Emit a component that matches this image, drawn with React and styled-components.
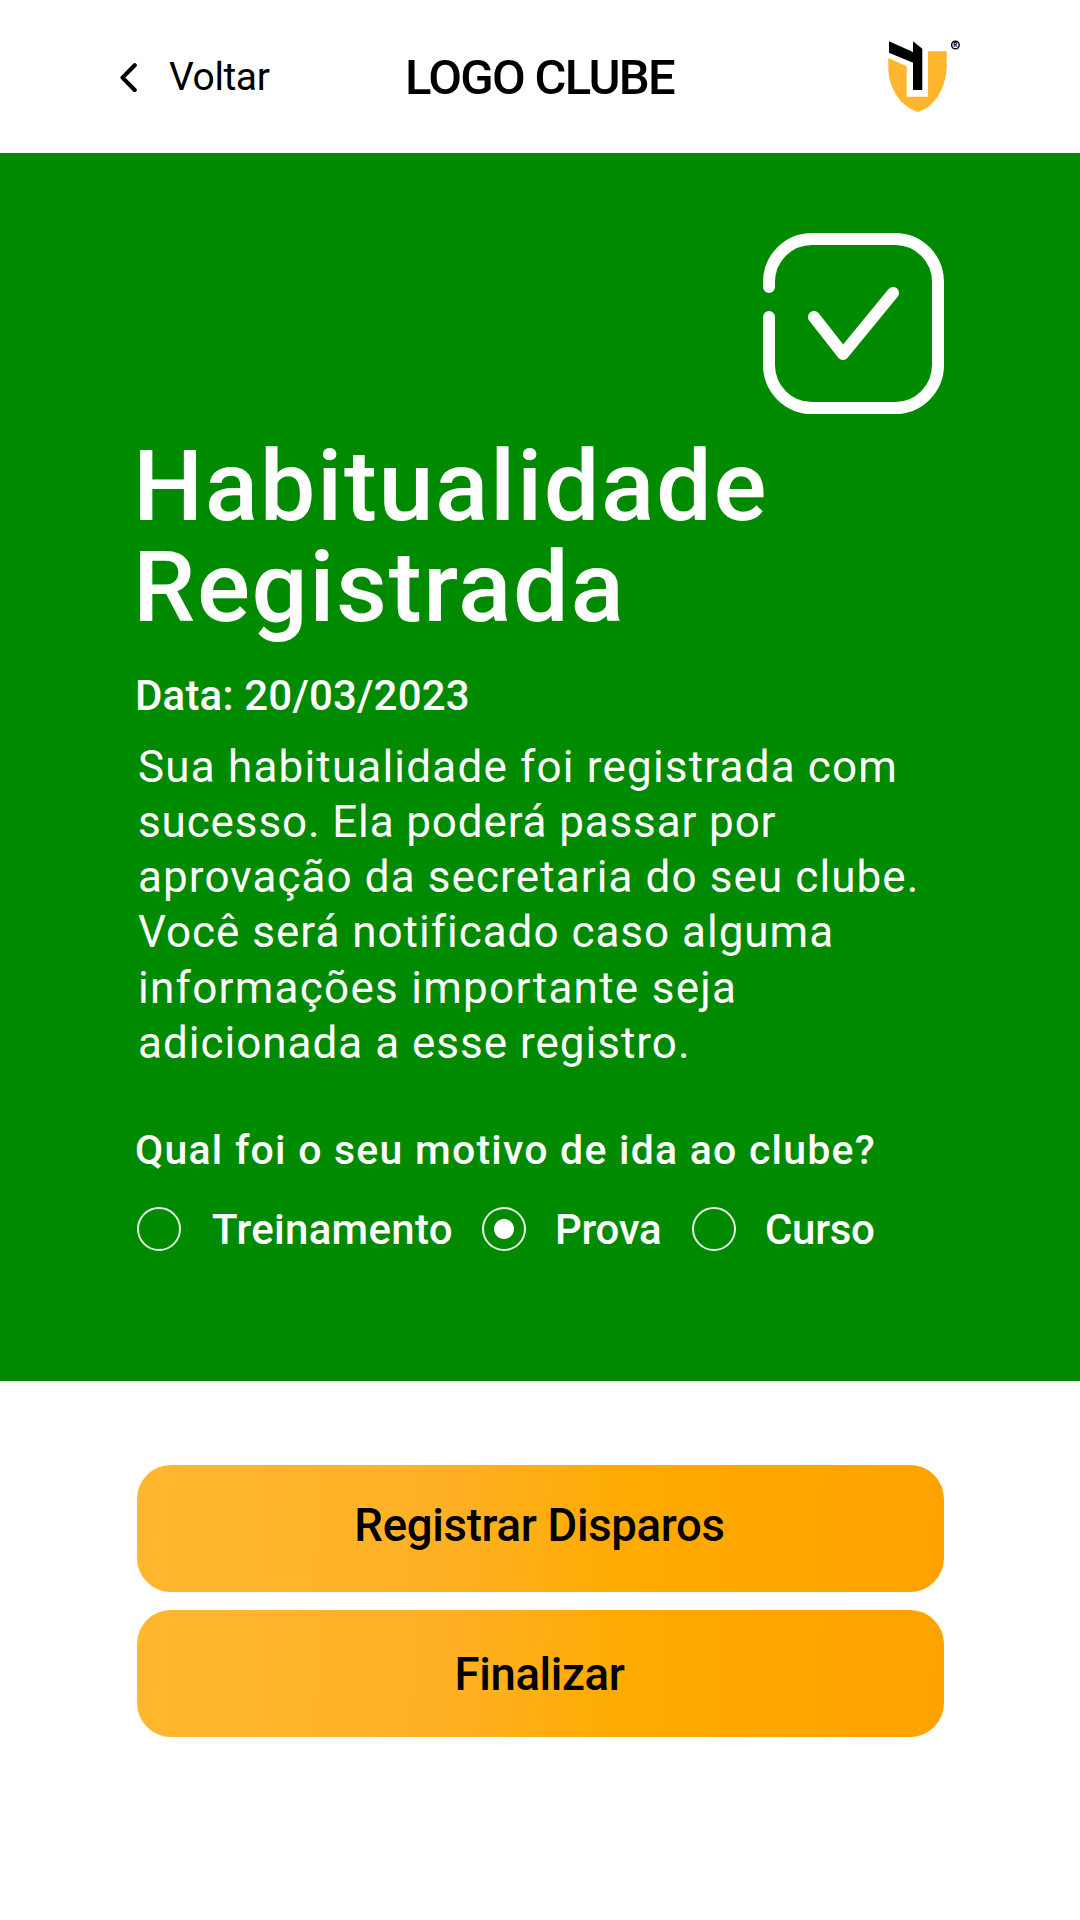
import React, { useState } from "react";
import styled, { createGlobalStyle } from "styled-components";

const GlobalStyle = createGlobalStyle`
  * {
    box-sizing: border-box;
  }

  body {
    margin: 0;
    background: #fff;
    font-family: Roboto, "Liberation Sans", sans-serif;
  }
`;

const Page = styled.div`
  display: flex;
  flex-direction: column;
  width: 1080px;
  height: 1920px;
  overflow: hidden;
`;

const Header = styled.header`
  display: grid;
  grid-template-columns: 285px 270px 285px;
  align-items: center;
  height: 153px;
  padding: 0 120px;
`;

const BackButton = styled.button`
  display: flex;
  align-items: center;
  gap: 32px;
  padding: 0;
  border: 0;
  background: none;
  color: #000;
  font: 400 39px/46px Roboto, sans-serif;
  cursor: pointer;
`;

const ClubName = styled.div`
  padding-top: 2px;
  color: #000;
  font-size: 49px;
  font-weight: 500;
  line-height: 58px;
`;

const Brand = styled.div`
  display: flex;
  justify-content: flex-end;
`;

const Panel = styled.main`
  display: flex;
  flex-direction: column;
  height: 1228px;
  padding: 80px 136px 0 137px;
  background: #008a00;
  color: #fff;
`;

const CheckIcon = styled.svg`
  align-self: flex-end;
  flex: none;
  width: 181px;
  height: 181px;
`;

const Title = styled.h1`
  margin: 22px 0 0 -4px;
  font-size: 99px;
  font-weight: 500;
  line-height: 101px;
  letter-spacing: 1.6px;
`;

const Line = styled.span`
  display: block;
  white-space: nowrap;
  letter-spacing: ${({ $spacing = 0 }) => $spacing}px;
`;

const DateText = styled.div`
  margin: 33px 0 0 -2px;
  font-size: 42px;
  font-weight: 500;
  line-height: 50px;
`;

const Message = styled.p`
  margin: 19px 0 0 1px;
  font-size: 44px;
  line-height: 55.15px;
`;

const Question = styled.div`
  margin: 54px 0 0 -2px;
  font-size: 41px;
  font-weight: 500;
  line-height: 50px;
`;

const Options = styled.div`
  display: flex;
  margin-top: 32px;
`;

const Option = styled.label`
  display: flex;
  align-items: center;
  width: ${({ $width }) => $width}px;
  height: 44px;
  font-size: 42px;
  font-weight: 500;
  line-height: 46px;
  cursor: pointer;

  > span {
    padding-top: 2px;
  }
`;

const Radio = styled.input`
  flex: none;
  appearance: none;
  width: 44px;
  height: 44px;
  margin: 0 ${({ $gap }) => $gap}px 0 0;
  border: 2px solid rgba(255, 255, 255, 0.9);
  border-radius: 50%;

  &:checked {
    background: radial-gradient(circle, #fff 9.5px, transparent 10.5px);
  }
`;

const Actions = styled.div`
  display: flex;
  flex-direction: column;
  gap: 18px;
  padding: 84px 136px 0 137px;
`;

const ActionButton = styled.button`
  height: 127px;
  padding: ${({ $shift = 0 }) => ($shift > 0 ? `${$shift}px 2px 0 0` : `0 2px ${-$shift}px 0`)};
  border: 0;
  border-radius: 34px;
  background: linear-gradient(94deg, #ffb72f 0%, #ffb125 38%, #ffad10 52%, #ffaa00 61%, #ffa200 100%);
  color: #000;
  font: 500 45.5px/54px Roboto, sans-serif;
  cursor: pointer;
`;

const reasons = [
  { id: "treinamento", label: "Treinamento", width: 345, gap: 31, spacing: 0.3 },
  { id: "prova", label: "Prova", width: 210, gap: 29, spacing: -0.3 },
  { id: "curso", label: "Curso", width: 190, gap: 29, spacing: -0.3 },
];

const message = [
  { text: "Sua habitualidade foi registrada com", spacing: 1.19 },
  { text: "sucesso. Ela poderá passar por", spacing: 0.87 },
  { text: "aprovação da secretaria do seu clube.", spacing: 1.1 },
  { text: "Você será notificado caso alguma", spacing: 0.99 },
  { text: "informações importante seja", spacing: 1.28 },
  { text: "adicionada a esse registro.", spacing: 1 },
];

function Chevron() {
  return (
    <svg width="17" height="30" viewBox="0 0 17 30" fill="none">
      <path d="M14.7 3.2 2.5 15.6 14.7 28" stroke="#000" strokeWidth="4.2" strokeLinecap="round" strokeLinejoin="round" />
    </svg>
  );
}

function Shield() {
  return (
    <svg width="72" height="74" viewBox="0 0 72 74">
      <path
        d="M.3 18 18.7 26.3V56.7H40V11.3H58.7V25C58.7 46 48 66.5 30 72C11 66 .3 46 .3 27Z"
        fill="#ffb62e"
      />
      <path d="M1 1.3 25 12V1.3L34.3 8.7V50H25V22.7L1 12.7Z" fill="#000" />
      <circle cx="67.4" cy="5" r="3.8" fill="none" stroke="#000" strokeWidth="1.4" />
      <text x="67.4" y="7.3" fontSize="6.4" fontWeight="700" textAnchor="middle">
        R
      </text>
    </svg>
  );
}

export default function App() {
  const [reason, setReason] = useState("prova");

  return (
    <Page>
      <GlobalStyle />
      <Header>
        <BackButton>
          <Chevron />
          <Line $spacing={-0.4}>Voltar</Line>
        </BackButton>
        <ClubName>
          <Line $spacing={-1.7}>LOGO CLUBE</Line>
        </ClubName>
        <Brand>
          <Shield />
        </Brand>
      </Header>

      <Panel>
        <CheckIcon viewBox="0 0 181 181" fill="none" stroke="#fff" strokeWidth="12" strokeLinecap="round" strokeLinejoin="round">
          <path d="M6 54V49A43 43 0 0 1 49 6H132A43 43 0 0 1 175 49V132A43 43 0 0 1 132 175H49A43 43 0 0 1 6 132V84" />
          <path d="M51 84 80 121 130 60" />
        </CheckIcon>

        <Title>
          Habitualidade
          <br />
          Registrada
        </Title>
        <DateText>
          <Line $spacing={0.18}>Data: 20/03/2023</Line>
        </DateText>
        <Message>
          {message.map((line) => (
            <Line key={line.text} $spacing={line.spacing}>
              {line.text}
            </Line>
          ))}
        </Message>

        <Question>
          <Line $spacing={1.22}>Qual foi o seu motivo de ida ao clube?</Line>
        </Question>
        <Options>
          {reasons.map(({ id, label, width, gap, spacing }) => (
            <Option key={id} $width={width}>
              <Radio $gap={gap} type="radio" name="reason" checked={reason === id} onChange={() => setReason(id)} />
              <Line $spacing={spacing}>{label}</Line>
            </Option>
          ))}
        </Options>
      </Panel>

      <Actions>
        <ActionButton $shift={-6}>
          <Line $spacing={-0.3}>Registrar Disparos</Line>
        </ActionButton>
        <ActionButton $shift={2}>
          <Line $spacing={-0.35}>Finalizar</Line>
        </ActionButton>
      </Actions>
    </Page>
  );
}
